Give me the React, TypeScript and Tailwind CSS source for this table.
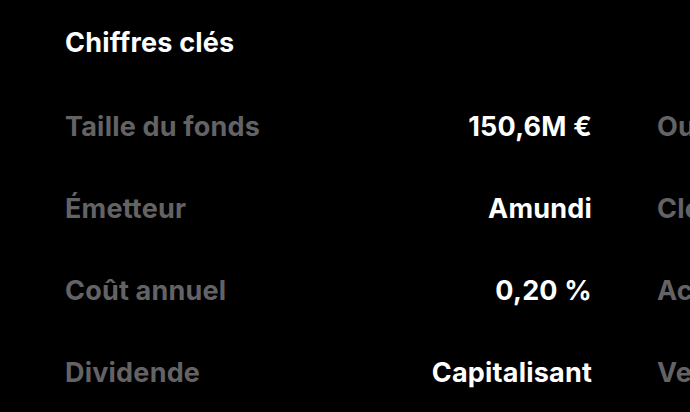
const rowsLeft = [
  { label: "Taille du fonds", value: "150,6M €" },
  { label: "Émetteur", value: "Amundi" },
  { label: "Coût annuel", value: "0,20 %" },
  { label: "Dividende", value: "Capitalisant" },
];

const rowsRight = [
  { label: "Ouverture", value: "31/01/2013" },
  { label: "Clé ISIN", value: "FR0011550185" },
  { label: "Actifs", value: "Actions" },
  { label: "Versement", value: "Aucun" },
];

const Column = ({ rows }: { rows: { label: string; value: string }[] }) => (
  <div className="flex w-[527px] shrink-0 flex-col">
    {rows.map((r) => (
      <div key={r.label} className="flex h-[82px] items-center justify-between">
        <span className="text-[#636366]">{r.label}</span>
        <span className="text-white">{r.value}</span>
      </div>
    ))}
  </div>
);

export default function App() {
  return (
    <div
      className="h-[412px] w-[690px] overflow-hidden bg-black pl-[65px] pt-[25px] text-[27px] font-bold tracking-[0.2px]"
      style={{ fontFamily: "Inter, sans-serif" }}
    >
      <h2 className="h-[36px] leading-[36px] text-white">Chiffres clés</h2>
      <div className="mt-[25px] flex gap-[65px]">
        <Column rows={rowsLeft} />
        <Column rows={rowsRight} />
      </div>
    </div>
  );
}
